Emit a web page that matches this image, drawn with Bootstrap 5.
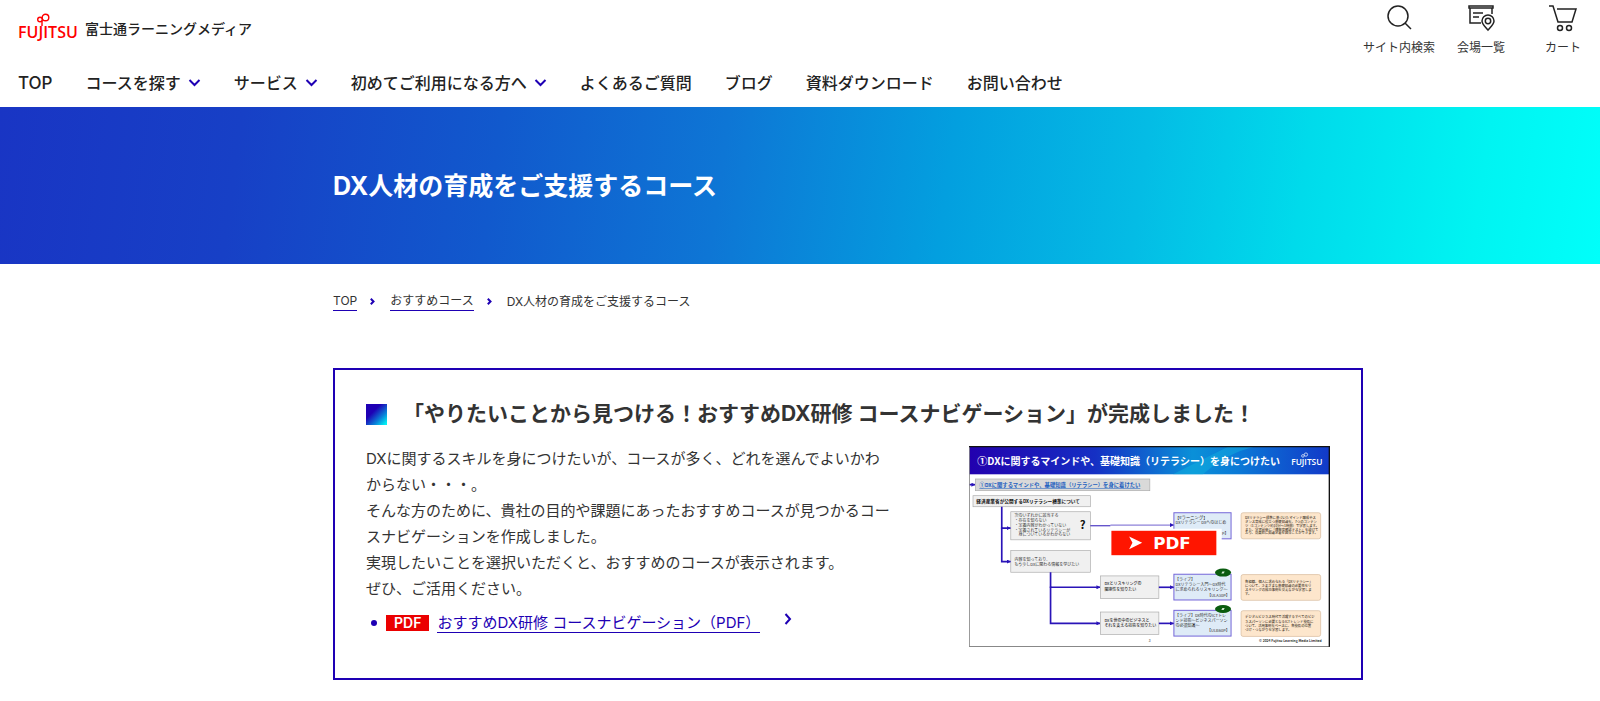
<!DOCTYPE html>
<html lang="ja">
<head>
<meta charset="utf-8">
<meta name="viewport" content="width=device-width, initial-scale=1">
<title>DX人材の育成をご支援するコース</title>
<link rel="stylesheet" href="https://cdn.jsdelivr.net/npm/bootstrap@5.3.0/dist/css/bootstrap.min.css">
<style>
  :root { --brand: #1e00b4; --ink: #333; }
  body { font-family: Inter, "Noto Sans CJK JP", sans-serif; color: var(--ink); font-size: 15px; line-height: 26px; }
  .site-top { height: 60px; padding-left: 18px; }
  .brand-logo { color: #222; font-size: 14px; font-weight: 500; line-height: 20px; padding-top: 13px; gap: 4px; }
  .tools { gap: 8px; }
  .tool-link { width: 74px; color: var(--ink); font-size: 12px; line-height: 18px; padding-top: 3px; gap: 4px; }
  .site-nav { height: 47px; padding: 0 18px 2px; gap: 33px; font-size: 16px; line-height: 24px; font-weight: 500; }
  .site-nav a, .site-nav button { color: #222; text-decoration: none; white-space: nowrap; }
  .site-nav button { background: none; border: 0; padding: 0; font-weight: 500; gap: 7px; }
  .site-nav .home-link { font-size: 17px; }
  .hero { height: 157px; background: linear-gradient(98deg, #1935c4 0%, #1740c6 15%, #1159cd 31%, #0e76d5 45%, #039fdf 59%, #04bce5 71%, #00dbeb 81%, #00f4f2 92%, #00fffa 100%); }
  .hero h1 { font-size: 25px; line-height: 36px; font-weight: 700; }
  .page-col { padding-left: 333px; padding-right: 237px; }
  .crumbs { font-size: 12px; line-height: 18px; padding-top: 28px; gap: 13px; }
  .crumbs a { color: var(--ink); text-decoration: none; border-bottom: 1px solid var(--brand); }
  .crumbs li + li { gap: 15px; }
  .notice { border: 2px solid var(--brand); padding: 28px 31px 31px; margin-top: 57px; }
  .notice h2 { font-size: 21px; line-height: 32px; font-weight: 700; gap: 16px; }
  .square { width: 21px; height: 21px; background: linear-gradient(135deg, #1e00b4 35%, #0a7fd8 68%, #00f4f4 95%); }
  .lead-copy { width: 528px; }
  .doc-list { color: var(--brand); padding: 11px 0 0 5px; }
  .bullet-dot { width: 6px; height: 6px; border-radius: 50%; background: var(--brand); margin-right: 9px; }
  .pdf-tag { background: #eb0000; color: #fff; font-size: 14px; line-height: 16px; font-weight: 600; padding: 0 8px; margin-right: 8px; }
  .doc-link { color: var(--brand); text-decoration: none; line-height: 18px; border-bottom: 1px solid var(--brand); margin-right: 24px; }
  .thumb { margin-top: 16px; }
  @media (max-width: 1300px) { .page-col { padding-left: 24px; padding-right: 24px; } .site-nav { flex-wrap: wrap; height: auto; } }
</style>
</head>
<body>
<header>
  <div class="site-top d-flex justify-content-between align-items-start">
    <a href="#" class="brand-logo d-flex align-items-center text-decoration-none">
      <svg width="63" height="32" viewBox="0 0 63 32" role="img" aria-label="FUJITSU">
        <text x="0" y="25" font-family="Open Sans, sans-serif" font-size="16" font-weight="600" fill="#f00">FUJITSU</text>
        <g fill="none" stroke="#f00" stroke-width="1.400"><circle cx="27.500" cy="4.500" r="3.300"/><circle cx="22" cy="6.500" r="2.300"/><path d="M24 7.500V13"/></g>
      </svg>
      <span>富士通ラーニングメディア</span>
    </a>
    <nav class="tools d-flex" aria-label="ツール">
      <a href="#" class="tool-link d-flex flex-column align-items-center text-decoration-none">
        <svg width="30" height="32" viewBox="0 0 30 32" fill="none" stroke="#222" stroke-width="1.500"><circle cx="14" cy="13" r="10"/><path d="m21 20 6 6"/></svg>
        <span>サイト内検索</span>
      </a>
      <a href="#" class="tool-link d-flex flex-column align-items-center text-decoration-none">
        <svg width="30" height="32" viewBox="0 0 30 32" fill="none" stroke="#222" stroke-width="1.500"><path d="M3 3h24v2H3zM4 5v15h11M26 5v6M7 10h10M7 14h6"/><path d="M22 27c-3-3.500-6-6-6-9a6 6 0 0 1 12 0c0 3-3 5.500-6 9z"/><circle cx="22" cy="18" r="2.700"/></svg>
        <span>会場一覧</span>
      </a>
      <a href="#" class="tool-link d-flex flex-column align-items-center text-decoration-none">
        <svg width="30" height="32" viewBox="0 0 30 32" fill="none" stroke="#222" stroke-width="1.500"><path d="M1 3h4l5 16h14l4-13H9"/><circle cx="12" cy="25" r="2.500"/><circle cx="21" cy="25" r="2.500"/></svg>
        <span>カート</span>
      </a>
    </nav>
  </div>
  <nav class="site-nav d-flex align-items-center" aria-label="メイン">
    <a href="#" class="home-link">TOP</a>
    <button type="button" class="d-flex align-items-center">コースを探す<svg width="13" height="8" viewBox="0 0 13 8" fill="none" stroke="#1e00b4" stroke-width="2"><path d="m1.500 1 5 5 5-5"/></svg></button>
    <button type="button" class="d-flex align-items-center">サービス<svg width="13" height="8" viewBox="0 0 13 8" fill="none" stroke="#1e00b4" stroke-width="2"><path d="m1.500 1 5 5 5-5"/></svg></button>
    <button type="button" class="d-flex align-items-center">初めてご利用になる方へ<svg width="13" height="8" viewBox="0 0 13 8" fill="none" stroke="#1e00b4" stroke-width="2"><path d="m1.500 1 5 5 5-5"/></svg></button>
    <a href="#">よくあるご質問</a>
    <a href="#">ブログ</a>
    <a href="#">資料ダウンロード</a>
    <a href="#">お問い合わせ</a>
  </nav>
</header>

<div class="hero page-col d-flex align-items-center">
  <h1 class="text-white m-0">DX人材の育成をご支援するコース</h1>
</div>

<main class="page-col">
  <nav aria-label="パンくず">
    <ol class="crumbs d-flex list-unstyled m-0">
      <li><a href="#" class="d-block">TOP</a></li>
      <li class="d-flex align-items-center"><svg width="5" height="7" viewBox="0 0 5 7" fill="none" stroke="#1e00b4" stroke-width="2"><path d="m.8.8 2.700 2.700L.8 6.200"/></svg><a href="#" class="d-block">おすすめコース</a></li>
      <li class="d-flex align-items-center"><svg width="5" height="7" viewBox="0 0 5 7" fill="none" stroke="#1e00b4" stroke-width="2"><path d="m.8.8 2.700 2.700L.8 6.200"/></svg><span>DX人材の育成をご支援するコース</span></li>
    </ol>
  </nav>

  <section class="notice">
    <h2 class="d-flex align-items-center m-0"><span class="square flex-shrink-0"></span><span>「やりたいことから見つける！おすすめDX研修 コースナビゲーション」が完成しました！</span></h2>
    <div class="d-flex justify-content-between align-items-start">
      <div class="pt-3">
        <p class="lead-copy m-0">DXに関するスキルを身につけたいが、コースが多く、どれを選んでよいかわからない・・・。<br>そんな方のために、貴社の目的や課題にあったおすすめコースが見つかるコースナビゲーションを作成しました。<br>実現したいことを選択いただくと、おすすめのコースが表示されます。<br>ぜひ、ご活用ください。</p>
        <ul class="doc-list list-unstyled m-0">
          <li class="d-flex align-items-center"><span class="bullet-dot"></span><span class="pdf-tag">PDF</span><a href="#" class="doc-link">おすすめDX研修 コースナビゲーション（PDF）</a><svg width="9" height="20" viewBox="0 0 9 20" fill="none" stroke="#1e00b4" stroke-width="2"><path d="m1.500 1 4.500 5-4.500 5"/></svg></li>
        </ul>
      </div>
      <a href="#" class="thumb flex-shrink-0">
        <svg class="d-block" width="361" height="201" viewBox="0 0 1080 600" font-family="Noto Sans CJK JP, sans-serif" font-size="12" fill="#333" role="img" aria-label="コースナビゲーション">
          <defs>
            <linearGradient id="bar"><stop offset="0" stop-color="#2200ae"/><stop offset=".35" stop-color="#1530c4"/><stop offset=".62" stop-color="#0a90d8"/><stop offset=".75" stop-color="#0b78d6"/><stop offset="1" stop-color="#1238c8"/></linearGradient>
            <marker id="tip" viewBox="0 0 10 10" refX="9" refY="5" markerWidth="12" markerHeight="12" markerUnits="userSpaceOnUse" orient="auto"><path d="M0 0 10 5 0 10z" fill="#2a14b8"/></marker>
          </defs>
          <rect width="1080" height="600" fill="#fff"/>
          <rect width="1080" height="84" fill="url(#bar)"/>
          <path d="M610 84 778 0H860Q770 20 700 84z" fill="#12b4e0" opacity=".45"/>
          <text x="25" y="57" font-size="30" font-weight="700" fill="#fff">①DXに関するマインドや、基礎知識（リテラシー）を身につけたい</text>
          <text x="964" y="57" font-size="25" font-weight="600" font-family="Open Sans, sans-serif" fill="#fff">FUJITSU</text>
          <g fill="none" stroke="#fff" stroke-width="2"><circle cx="1008" cy="25" r="5"/><circle cx="999" cy="29" r="4"/></g>

          <g fill="#f0f0f0" stroke="#aaa" stroke-width="2">
            <rect x="19" y="98" width="522" height="35" fill="#d9d9d9"/>
            <rect x="12" y="148" width="351" height="33"/>
            <rect x="125" y="196" width="238" height="84"/>
            <rect x="125" y="312" width="238" height="65"/>
            <rect x="393" y="388" width="175" height="68"/>
            <rect x="393" y="496" width="175" height="67"/>
          </g>
          <g fill="#deebf7" stroke="#7466d8" stroke-width="3">
            <rect x="613" y="199" width="171" height="78"/>
            <rect x="613" y="383" width="171" height="77"/>
            <rect x="613" y="491" width="171" height="77"/>
          </g>
          <g fill="#fde6cc" stroke="#d5b99b" stroke-width="2">
            <rect x="814" y="199" width="238" height="78" rx="6"/>
            <rect x="814" y="384" width="238" height="77" rx="6"/>
            <rect x="814" y="492" width="238" height="77" rx="6"/>
          </g>
          <g fill="none" stroke="#2a14b8" stroke-width="5">
            <path d="M0 115h18" marker-end="url(#tip)"/>
            <path d="M98 181v64h26" marker-end="url(#tip)"/>
            <path d="M98 243v102h26" marker-end="url(#tip)"/>
            <path d="M244 377v45h148" marker-end="url(#tip)"/>
            <path d="M244 420v110h148" marker-end="url(#tip)"/>
            <path d="M568 422h44" marker-end="url(#tip)"/>
            <path d="M568 530h44" marker-end="url(#tip)"/>
            <path d="M363 238h60" stroke-width="3"/>
            <path d="M423 236h189" stroke-width="2" marker-end="url(#tip)"/>
          </g>

          <text x="31" y="122" font-size="16" font-weight="700" fill="#1c5fc0" text-decoration="underline">①DXに関するマインドや、基礎知識（リテラシー）を身に着けたい</text>
          <text x="22" y="170" font-size="14" font-weight="700" fill="#111">経済産業省が公開するDXリテラシー標準について</text>
          <text><tspan x="136" y="213">次のいずれかに該当する</tspan><tspan x="136" y="228">・存在を知らない</tspan><tspan x="136" y="242">・定義内容がわかっていない</tspan><tspan x="136" y="256">・定義されているリテラシーが</tspan><tspan x="148" y="270">身についているかわからない</tspan></text>
          <text x="331" y="247" font-size="34" font-weight="700" fill="#111">?</text>
          <text><tspan x="136" y="342">内容を知っており、</tspan><tspan x="136" y="357">もう少しDXに関わる情報を学びたい</tspan></text>
          <text font-weight="500"><tspan x="405" y="415">DXとリスキリングの</tspan><tspan x="405" y="432">関連性を知りたい</tspan></text>
          <text font-weight="500"><tspan x="405" y="525">DXを世の中のビジネスと</tspan><tspan x="405" y="541">それを支える技術を知りたい</tspan></text>
          <text font-size="13"><tspan x="616" y="217">【eラーニング】</tspan><tspan x="618" y="234" font-size="12">DXリテラシー DXへのはじめ</tspan></text>
          <text><tspan x="616" y="402">【ライブ】</tspan><tspan x="618" y="417">DXリテラシー入門～DX時代</tspan><tspan x="618" y="434">に求められるリスキリング～</tspan><tspan x="780" y="450" text-anchor="end">【ULA30P】</tspan></text>
          <text><tspan x="616" y="510">【ライブ】DX時代のICTトレ</tspan><tspan x="618" y="526">ンド技術～ビジネスパーソン</tspan><tspan x="618" y="542">の必須知識～</tspan><tspan x="780" y="557" text-anchor="end">【ULB60P】</tspan></text>
          <g font-size="10" font-weight="500" fill="#4a3d30">
            <text><tspan x="826" y="218">DXリテラシー標準に基づいたマインド醸成やス</tspan><tspan x="826" y="230">タンス育成に役立つ基礎知識を、7つのコンテン</tspan><tspan x="826" y="241">ツ（1コンテンツ約10分～1時間）で学習します。</tspan><tspan x="826" y="253">また、学習前後に「理解度確認テスト」を設けて</tspan><tspan x="826" y="264">おり、効果的に知識定着を図ることができます。</tspan></text>
            <text><tspan x="826" y="408">各組織、個人に求められる「DXリテラシー」</tspan><tspan x="826" y="420">について、さまざまな基礎知識の必要性をリ</tspan><tspan x="826" y="433">スキリングの成功事例を交えながら学習しま</tspan><tspan x="826" y="445">す。</tspan></text>
            <text><tspan x="826" y="515">デジタルビジネス時代で活躍するすべてのビジ</tspan><tspan x="826" y="528">ネスパーソンに必要となるICTトレンド技術に</tspan><tspan x="826" y="541">ついて、活用事例をベースに、各技術の位置</tspan><tspan x="826" y="554">づけ・つながりを学習します。</tspan></text>
          </g>
          <g fill="#0a5c0f"><ellipse cx="760" cy="378" rx="24" ry="12"/><ellipse cx="760" cy="487" rx="24" ry="12"/></g>
          <g fill="#cfe5cf"><path d="M755 381l3-6h7l-3 6zM755 490l3-6h7l-3 6z"/></g>
          <path d="M420 247h336v35H420z" fill="#fff"/>
          <text x="757" y="266">P】</text>
          <rect x="426" y="253" width="314" height="73" fill="#ff1500"/>
          <path d="m479 270 39 19-39 19 10-19z" fill="#fff"/>
          <text x="551" y="308" font-family="DejaVu Sans, sans-serif" font-size="50" font-weight="700" fill="#fff">PDF</text>
          <text x="538" y="587" font-size="10">3</text>
          <text x="1055" y="587" font-size="10" font-weight="700" text-anchor="end">© 2024 Fujitsu Learning Media Limited</text>
          <path d="M0 599h1080M1 0v600" stroke="#888" stroke-width="3"/>
          <path d="M0 1h1078v599" fill="none" stroke="#111" stroke-width="4"/>
        </svg>
      </a>
    </div>
  </section>
</main>
<script src="https://cdn.jsdelivr.net/npm/bootstrap@5.3.0/dist/js/bootstrap.bundle.min.js"></script>
</body>
</html>
